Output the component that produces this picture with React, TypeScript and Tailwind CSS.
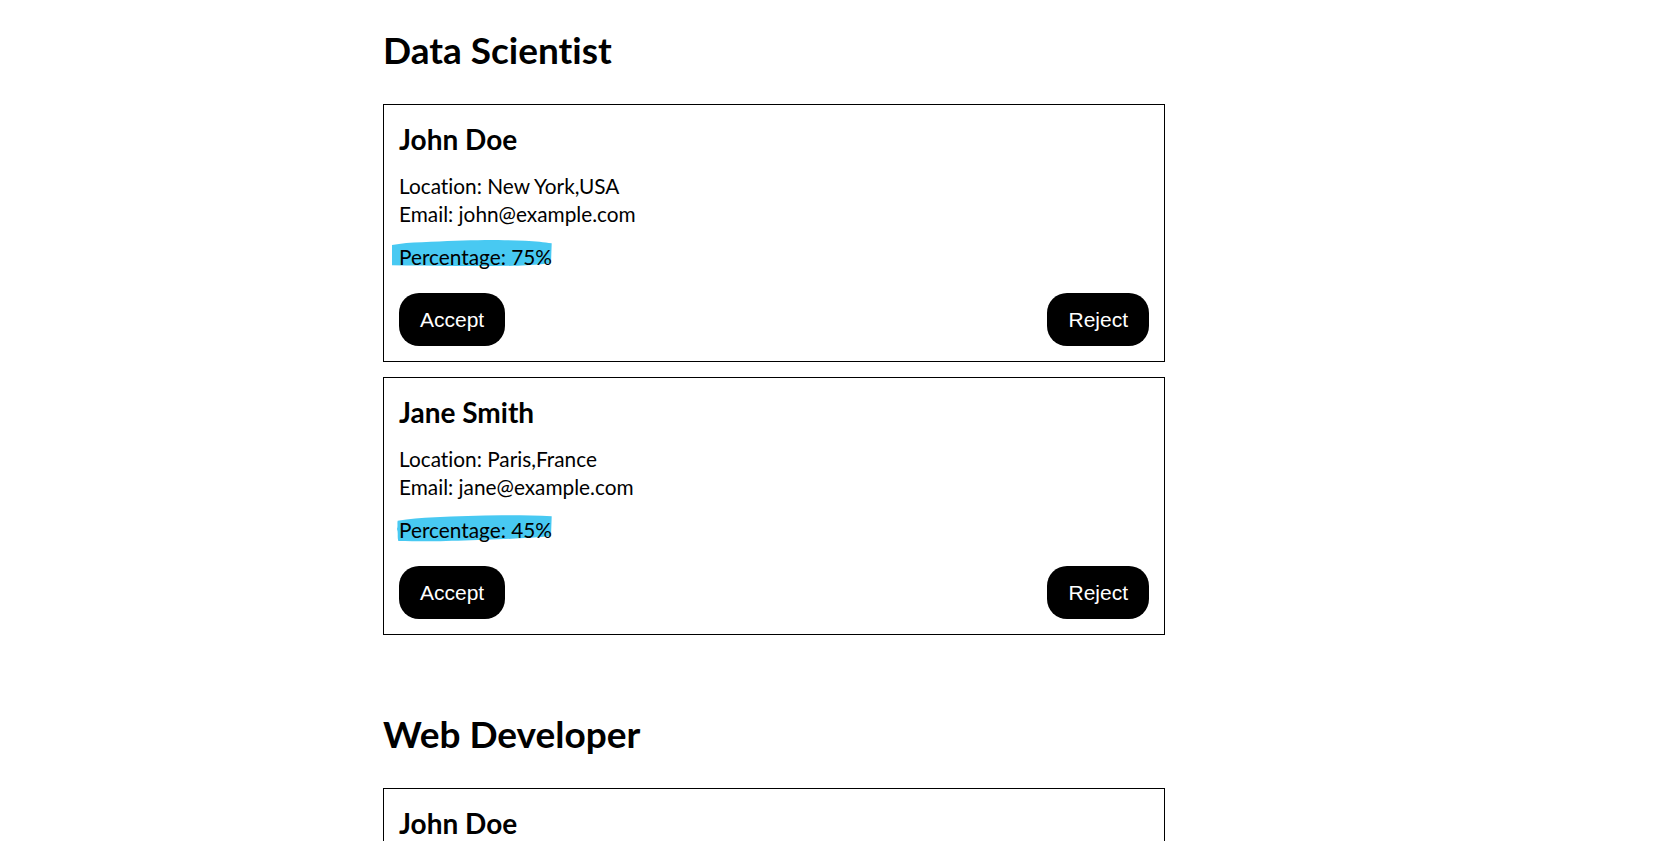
import React from "react";

type Cand = { name: string; location: string; email: string; pct: number };

const HL1 = "M1,5 C10,3.5 20,2.5 31,2.3 C55,1 75,0.3 94,0 C110,0 122,0.3 134,0.7 C145,1.2 153,2.2 160.7,3.3 L160,23.3 C150,24.5 138,25.3 127,25.7 C105,26.2 80,26.2 60.7,26 C40,25.8 20,25.6 1,25.3 Z";
const HL2 = "M6.7,7.7 C18,6 30,5 44,4.3 C65,3.3 88,2.5 110.7,2.3 C130,2.3 146,2.7 160.7,3.3 L160,23.3 C140,25 118,26 94,26.7 C75,27.3 58,28 44,28.3 C30,28.4 18,28.2 7.3,28 C6,24 7.5,20 6,16 C7,13 6,10 6.7,7.7 Z";

const sections: { title: string; cands: Cand[] }[] = [
  {
    title: "Data Scientist",
    cands: [
      { name: "John Doe", location: "New York,USA", email: "john@example.com", pct: 75 },
      { name: "Jane Smith", location: "Paris,France", email: "jane@example.com", pct: 45 },
    ],
  },
  {
    title: "Web Developer",
    cands: [
      { name: "John Doe", location: "New York,USA", email: "john@example.com", pct: 75 },
      { name: "Jane Smith", location: "Paris,France", email: "jane@example.com", pct: 45 },
    ],
  },
];

function Card({ c, idx }: { c: Cand; idx: number }) {
  return (
    <div className="border border-black px-[15px] pt-4 pb-[15px]">
      <h3 className="text-[28px] font-bold leading-[36px]">{c.name}</h3>
      <div className="mt-[15px] text-[20.8px] leading-[28px]">
        <p>Location: {c.location}</p>
        <p>Email: {c.email}</p>
      </div>
      <p className="mt-[15px] text-[20.8px] leading-[28px]">
        <span className="relative inline-block">
          <svg
            className="absolute left-[-8px] top-[-3px] h-[30px] w-[162px]"
            viewBox="0 0 162 30"
            preserveAspectRatio="none"
          >
            <path d={idx % 2 === 0 ? HL1 : HL2} fill="#48c9f2" />
          </svg>
          <span className="relative">Percentage: {c.pct}%</span>
        </span>
      </p>
      <div className="mt-[22px] flex justify-between" style={{ fontFamily: '"Liberation Sans", Arial, sans-serif' }}>
        <button className="h-[53px] rounded-[20px] bg-black px-[21px] text-[21px] text-white">Accept</button>
        <button className="h-[53px] rounded-[20px] bg-black px-[21px] text-[21px] text-white">Reject</button>
      </div>
    </div>
  );
}

export default function App() {
  return (
    <div
      className="min-h-screen bg-white text-black [font-variant-ligatures:none]"
      style={{ fontFamily: 'Lato, "Noto Sans", sans-serif' }}
    >
      <div className="ml-[383px] w-[782px] pt-[25px]">
        {sections.map((s, si) => (
          <section key={si} className={si > 0 ? "mt-[74px]" : ""}>
            <h2 className="mb-[29px] text-[37px] font-bold leading-[50px]">{s.title}</h2>
            <div className="flex flex-col gap-[15px]">
              {s.cands.map((c, ci) => (
                <Card key={ci} c={c} idx={ci} />
              ))}
            </div>
          </section>
        ))}
      </div>
    </div>
  );
}
